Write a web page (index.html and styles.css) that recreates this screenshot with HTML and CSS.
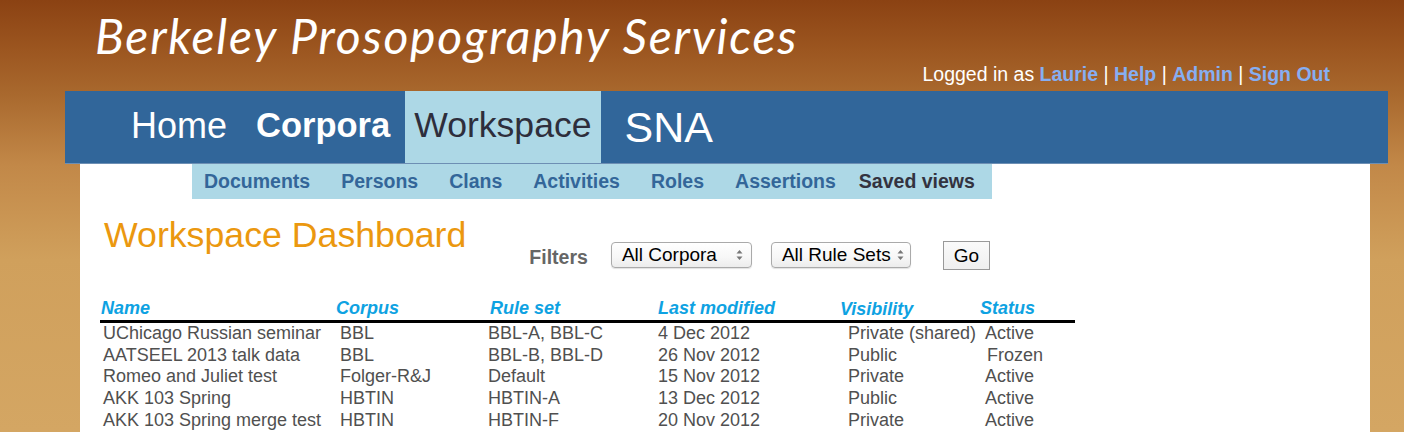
FILE: index.html
```html
<html>

<head>
    <meta http-equiv="Content-Type" content="text/html;charset=utf-8">
    <link rel="stylesheet" href="styles.css">
</head>

<body>
    <div class="page">
        <div class="masthead">
            <div class="sitetitle">Berkeley Prosopography Services</div>
            <div class="login">
                Logged in as <a href="#">Laurie</a> | <a href="#">Help</a> | <a href="#">Admin</a> | <a href="#">Sign Out</a>
            </div>
        </div>

        <div class="topnav">
            <a href="#" class="home">Home</a>
            <a href="#" class="corpora">Corpora</a>
            <a href="#" class="current">Workspace</a>
            <a href="#" class="sna">SNA</a>
        </div>

        <div class="content">
            <div class="subnav">
                <a href="#">Documents</a>
                <a href="#">Persons</a>
                <a href="#">Clans</a>
                <a href="#">Activities</a>
                <a href="#">Roles</a>
                <a href="#">Assertions</a>
                <a href="#" class="current">Saved views</a>
            </div>

            <div class="dashhead">
                <h1>Workspace Dashboard</h1>
                <div class="filters">
                    <span class="label">Filters</span>
                    <span class="select sel-corpora">All Corpora
                        <svg width="7" height="12" viewBox="0 0 7 12"><path d="M3.5 1 L6.5 4.5 L0.5 4.5 Z M3.5 11 L6.5 7.5 L0.5 7.5 Z" fill="#777"/></svg>
                    </span>
                    <span class="select sel-rules">All Rule Sets
                        <svg width="7" height="12" viewBox="0 0 7 12"><path d="M3.5 1 L6.5 4.5 L0.5 4.5 Z M3.5 11 L6.5 7.5 L0.5 7.5 Z" fill="#777"/></svg>
                    </span>
                    <span class="gobutton">Go</span>
                </div>
            </div>

            <table class="views">
                <colgroup>
                    <col style="width:236px">
                    <col style="width:152px">
                    <col style="width:170px">
                    <col style="width:182px">
                    <col style="width:140px">
                    <col style="width:95px">
                </colgroup>
                <thead>
                    <tr>
                        <th>Name</th>
                        <th>Corpus</th>
                        <th>Rule set</th>
                        <th>Last modified</th>
                        <th class="vis">Visibility</th>
                        <th>Status</th>
                    </tr>
                </thead>
                <tbody>
                    <tr><td>UChicago Russian seminar</td><td>BBL</td><td>BBL-A, BBL-C</td><td>4 Dec 2012</td><td>Private (shared)</td><td>Active</td></tr>
                    <tr><td>AATSEEL 2013 talk data</td><td>BBL</td><td>BBL-B, BBL-D</td><td>26 Nov 2012</td><td>Public</td><td class="frozen">Frozen</td></tr>
                    <tr><td>Romeo and Juliet test</td><td>Folger-R&amp;J</td><td>Default</td><td>15 Nov 2012</td><td>Private</td><td>Active</td></tr>
                    <tr><td>AKK 103 Spring</td><td>HBTIN</td><td>HBTIN-A</td><td>13 Dec 2012</td><td>Public</td><td>Active</td></tr>
                    <tr><td>AKK 103 Spring merge test</td><td>HBTIN</td><td>HBTIN-F</td><td>20 Nov 2012</td><td>Private</td><td>Active</td></tr>
                </tbody>
            </table>
        </div>
    </div>
</body>

</html>
```

FILE: styles.css
```css
body {
    margin: 0;
    height: 432px;
    overflow: hidden;
    font-family: "Liberation Sans", Arial, sans-serif;
    background: linear-gradient(180deg, #8b4213 0px, #9c5620 50px, #a9692e 95px, #c28848 165px, #d0a05c 260px, #d4a663 432px);
}

a {
    text-decoration: none;
}

.page {
    margin-left: 65px;
    width: 1323px;
}

/* masthead */
.masthead {
    height: 91px;
    display: flex;
    flex-direction: column;
}

.sitetitle {
    padding: 11px 0 0 30px;
    height: 50px;
    font-family: Lato, "Open Sans", sans-serif;
    font-style: italic;
    font-size: 48px;
    letter-spacing: 1.8px;
    line-height: 50px;
    color: #fff;
}

.login {
    text-align: right;
    padding: 2px 58px 0 0;
    font-size: 19.5px;
    line-height: 22px;
    color: #fff;
}

.login a {
    color: #86aef2;
    font-weight: bold;
}

/* main tabs */
.topnav {
    display: flex;
    height: 72px;
    padding-left: 57px;
    background-color: #31669a;
    border-bottom: 1px solid #6d8fb4;
}

.topnav a {
    display: flex;
    align-items: center;
    padding: 0 9px 3px 9px;
    font-size: 36px;
    color: #fff;
}

.topnav .corpora {
    font-weight: bold;
    font-size: 34.5px;
    margin-left: 11px;
}

.topnav .current {
    margin-left: 6px;
    font-size: 35.6px;
    background-color: #add8e6;
    color: #2e2e3c;
}

.topnav .sna {
    margin-left: 15px;
    font-size: 43px;
    padding-bottom: 0;
}

/* content */
.content {
    margin: 0 18px 0 15px;
    background-color: #fff;
    height: 268px;
}

.subnav {
    margin-left: 112px;
    width: 800px;
    height: 35px;
    display: flex;
    align-items: center;
    gap: 31px;
    padding-left: 12px;
    box-sizing: border-box;
    background-color: #add8e6;
}

.subnav a {
    font-size: 19.5px;
    font-weight: bold;
    color: #336699;
}

.subnav .current {
    margin-left: -8px;
    color: #33333f;
}

.dashhead {
    display: flex;
    height: 97px;
}

.dashhead h1 {
    margin: 16px 0 0 24px;
    font-size: 35.7px;
    line-height: 40px;
    font-weight: normal;
    color: #eb980f;
}

.filters {
    display: flex;
    align-items: center;
    margin: 41px 0 0 63px;
    height: 30px;
}

.filters .label {
    font-size: 19.5px;
    font-weight: bold;
    color: #666;
    margin-top: 4px;
}

.select {
    display: flex;
    align-items: center;
    justify-content: space-between;
    box-sizing: border-box;
    height: 26px;
    padding: 0 8px 0 10px;
    border: 1px solid #aaa;
    border-radius: 4px;
    background: linear-gradient(180deg, #fff 0%, #f7f7f7 60%, #ececec 100%);
    box-shadow: 0 1px 1px rgba(0,0,0,0.12);
    font-size: 19px;
    color: #000;
}

.sel-corpora {
    margin-left: 23px;
    width: 141px;
}

.sel-rules {
    margin-left: 19px;
    width: 140px;
    padding-right: 6px;
}

.gobutton {
    margin-left: 32px;
    box-sizing: border-box;
    width: 47px;
    height: 29px;
    line-height: 27px;
    text-align: center;
    border: 1px solid #999;
    background: linear-gradient(180deg, #fafafa 0%, #efefef 100%);
    font-size: 19px;
    color: #000;
}

/* saved views table */
.views {
    margin: 0 0 0 20px;
    width: 975px;
    table-layout: fixed;
    border-collapse: collapse;
}

.views th {
    text-align: left;
    padding: 0 0 1px 0;
    font-size: 18px;
    line-height: 22px;
    font-weight: bold;
    font-style: italic;
    color: #0ea2e2;
    border-bottom: 3px solid #000;
}

.views th:nth-child(1) { padding-left: 1px; }
.views th:nth-child(3) { padding-left: 2px; }
.views th.vis { padding-top: 3px; line-height: 20px; }

.views td {
    padding: 0;
    font-size: 18px;
    line-height: 21.7px;
    color: #505050;
    white-space: nowrap;
}

.views td:nth-child(1) { padding-left: 3px; }
.views td:nth-child(2) { padding-left: 4px; }
.views td:nth-child(5) { padding-left: 8px; }
.views td:nth-child(6) { padding-left: 5px; }
.views td.frozen { padding-left: 7px; }
```
